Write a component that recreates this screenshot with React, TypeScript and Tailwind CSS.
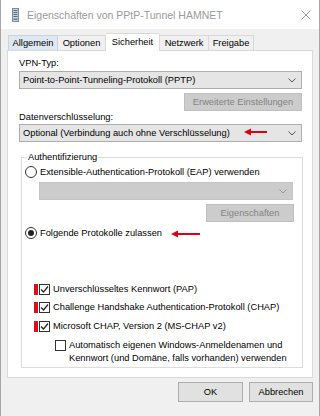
import React from "react";

function Chevron({ c = "#555" }: { c?: string }) {
  return (
    <svg width="8" height="5" viewBox="0 0 8 5">
      <path d="M0.5 0.5 L4 4 L7.5 0.5" fill="none" stroke={c} strokeWidth="1" />
    </svg>
  );
}

function Radio({ checked }: { checked?: boolean }) {
  return (
    <span className="w-[12px] h-[12px] rounded-full border border-[#333] bg-white flex items-center justify-center shrink-0">
      {checked && <span className="w-[6px] h-[6px] rounded-full bg-[#222]" />}
    </span>
  );
}

function Check({ checked }: { checked?: boolean }) {
  return (
    <span className="w-[11px] h-[11px] border border-[#333] bg-white flex items-center justify-center shrink-0">
      {checked && (
        <svg width="9" height="9" viewBox="0 0 9 9">
          <path d="M1 4.5 L3.5 7 L8 1.5" fill="none" stroke="#222" strokeWidth="1.2" />
        </svg>
      )}
    </span>
  );
}

function Arrow({ w }: { w: number }) {
  return (
    <svg width={w} height="8" viewBox={`0 0 ${w} 8`}>
      <path d="M0 4 L7 0.5 L7 7.5 Z" fill="#e00010" />
      <rect x="6" y="3" width={w - 6} height="2" fill="#e00010" />
    </svg>
  );
}

function CheckRow({ label }: { label: string }) {
  return (
    <div className="relative flex items-center ml-[17px] h-[12px] gap-[3px]">
      <span className="absolute left-[-5px] top-[1px] w-[4px] h-[11px] bg-[#d8101c]" />
      <Check checked />
      <span>{label}</span>
    </div>
  );
}

export default function App() {
  return (
    <div className="relative w-[320px] h-[416px] bg-[#f0f0f0] border-x border-[#a6a6a6] flex flex-col font-['Liberation_Sans',Arial,sans-serif] text-[9.3px] leading-[12px] text-black overflow-hidden">
      {/* Title bar */}
      <div className="h-[29px] bg-white flex items-center shrink-0">
        <div className="ml-[11px] w-[7px] h-[14px]">
          <svg width="7" height="14" viewBox="0 0 7 14">
            <rect x="0.5" y="0.5" width="6" height="13" fill="#c9d3de" stroke="#7d8a99" />
            <rect x="1.5" y="2" width="4" height="1" fill="#4a6d96" />
            <rect x="1.5" y="4" width="4" height="1" fill="#4a6d96" />
            <rect x="1.5" y="6" width="4" height="1" fill="#4a6d96" />
            <rect x="1.5" y="8" width="4" height="1" fill="#4a6d96" />
            <rect x="1.5" y="10.5" width="4" height="1.5" fill="#6d7a88" />
          </svg>
        </div>
        <div className="ml-[8px] text-[10.5px] text-[#9a9a9a]">Eigenschaften von PPtP-Tunnel HAMNET</div>
        <div className="ml-auto mr-[8px]">
          <svg width="10" height="10" viewBox="0 0 10 10">
            <path d="M0.5 0.5 L9.5 9.5 M9.5 0.5 L0.5 9.5" stroke="#999" strokeWidth="1" />
          </svg>
        </div>
      </div>

      {/* Tabs */}
      <div className="h-[21px] flex items-end pl-[7px] shrink-0 relative z-10">
        <div className="w-[50px] h-[15px] bg-[#dfe8f1] border border-b-0 border-[#c6d3e0] flex items-center justify-center">Allgemein</div>
        <div className="w-[48px] h-[15px] bg-[#f0f0f0] border border-l-0 border-b-0 border-[#d9d9d9] flex items-center justify-center">Optionen</div>
        <div className="w-[54px] h-[18px] -mb-px bg-white border border-l-0 border-b-0 border-[#d9d9d9] flex items-center justify-center pb-[2px]">Sicherheit</div>
        <div className="w-[49px] h-[15px] bg-[#f0f0f0] border border-l-0 border-b-0 border-[#d9d9d9] flex items-center justify-center">Netzwerk</div>
        <div className="w-[45px] h-[15px] bg-[#f0f0f0] border border-l-0 border-b-0 border-[#d9d9d9] flex items-center justify-center">Freigabe</div>
      </div>

      {/* Panel */}
      <div className="ml-[6px] w-[306px] h-[328px] shrink-0 bg-white border border-[#d9d9d9] pt-[6px] pl-[11px] pr-[10px] flex flex-col">
        <div className="h-[12px]">VPN-Typ:</div>
        <div className="mt-[2px] h-[18px] bg-[#e5e5e5] border border-[#adadad] flex items-center justify-between pl-[3px] pr-[5px]">
          <span>Point-to-Point-Tunneling-Protokoll (PPTP)</span>
          <Chevron />
        </div>
        <div className="mt-[4px] self-end w-[118px] h-[18px] bg-[#cccccc] border border-[#bfbfbf] text-[#838383] flex items-center justify-center">
          Erweiterte Einstellungen
        </div>
        <div className="h-[12px]">Datenverschlüsselung:</div>
        <div className="mt-[1px] h-[18px] bg-[#e5e5e5] border border-[#adadad] flex items-center justify-between pl-[3px] pr-[5px]">
          <span>Optional (Verbindung auch ohne Verschlüsselung)</span>
          <Chevron />
        </div>

        <fieldset className="mt-[9px] ml-[2px] -mr-[1px] border border-[#dcdcdc] flex flex-col pb-[2px]">
          <legend className="ml-[5px] px-[1px] leading-[12px]">Authentifizierung</legend>
          <div className="mt-[3px] pl-[3px] flex items-center gap-[3px] h-[12px]">
            <Radio />
            <span>Extensible-Authentication-Protokoll (EAP) verwenden</span>
          </div>
          <div className="mt-[4px] ml-[17px] mr-[9px] h-[18px] bg-[#cccccc] border border-[#c4c4c4] flex items-center justify-end pr-[5px]">
            <Chevron c="#9a9a9a" />
          </div>
          <div className="mt-[4px] self-end mr-[8px] w-[88px] h-[18px] bg-[#cccccc] border border-[#bfbfbf] text-[#838383] flex items-center justify-center">
            Eigenschaften
          </div>
          <div className="mt-[5px] pl-[3px] flex items-center gap-[3px] h-[12px]">
            <Radio checked />
            <span>Folgende Protokolle zulassen</span>
          </div>

          <div className="mt-[44px]">
            <CheckRow label="Unverschlüsseltes Kennwort (PAP)" />
          </div>
          <div className="mt-[6px]">
            <CheckRow label="Challenge Handshake Authentication-Protokoll (CHAP)" />
          </div>
          <div className="mt-[7px]">
            <CheckRow label="Microsoft CHAP, Version 2 (MS-CHAP v2)" />
          </div>
          <div className="mt-[7px] ml-[33px] flex items-start gap-[3px]">
            <span className="mt-[1px]">
              <Check />
            </span>
            <span className="leading-[13px]">
              Automatisch eigenen Windows-Anmeldenamen und
              <br />
              Kennwort (und Domäne, falls vorhanden) verwenden
            </span>
          </div>
        </fieldset>
      </div>

      {/* Buttons */}
      <div className="mt-[4px] mr-[6px] flex justify-end gap-[6px]">
        <div className="w-[65px] h-[20px] bg-[#e1e1e1] border border-[#adadad] flex items-center justify-center">OK</div>
        <div className="w-[64px] h-[20px] bg-[#e1e1e1] border border-[#adadad] flex items-center justify-center">Abbrechen</div>
      </div>

      {/* Red annotation arrows */}
      <div className="absolute left-[243px] top-[128px]">
        <Arrow w={23} />
      </div>
      <div className="absolute left-[170px] top-[230px]">
        <Arrow w={29} />
      </div>
    </div>
  );
}
